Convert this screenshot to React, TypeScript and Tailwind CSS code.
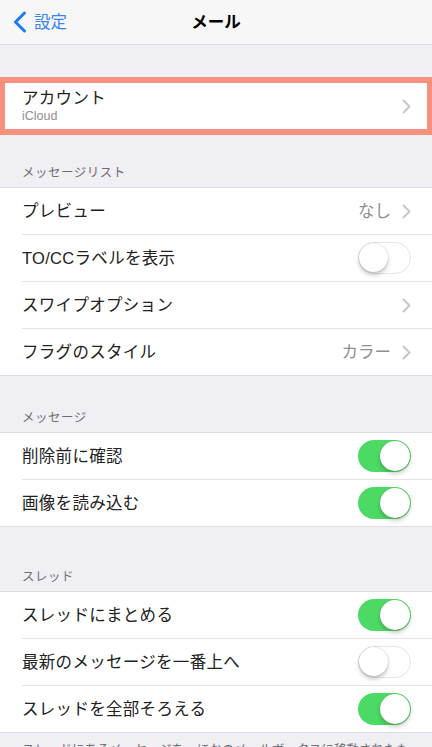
import React from 'react';

const font = { fontFamily: '"Liberation Sans", "Noto Sans CJK JP", sans-serif' };

function Chevron() {
  return (
    <svg width="9" height="15" viewBox="0 0 9 15" className="shrink-0">
      <polyline points="1.5,1.5 7.5,7.5 1.5,13.5" fill="none" stroke="#c7c7cc" strokeWidth="2" strokeLinecap="round" strokeLinejoin="round" />
    </svg>
  );
}

function Toggle({ on }: { on: boolean }) {
  return (
    <div
      className={
        on
          ? 'relative w-[53px] h-[32px] rounded-full bg-[#4cd964] shrink-0'
          : 'relative w-[53px] h-[32px] rounded-full bg-white border-[1.5px] border-[#e5e5ea] shrink-0'
      }
    >
      <div
        className={
          on
            ? 'absolute top-[1px] right-[1px] w-[30px] h-[30px] rounded-full bg-white shadow-[0_3px_4px_rgba(0,0,0,0.2),0_0_1px_rgba(0,0,0,0.2)]'
            : 'absolute top-[0px] left-[0px] w-[29px] h-[29px] rounded-full bg-white shadow-[0_3px_4px_rgba(0,0,0,0.22),0_0_1px_rgba(0,0,0,0.3)]'
        }
      />
    </div>
  );
}

type Row = { label: string; value?: string; chevron?: boolean; toggle?: boolean; on?: boolean };

function Group({ rows }: { rows: Row[] }) {
  return (
    <div className="bg-white border-y border-[#dedee2]">
      {rows.map((r, i) => (
        <div key={r.label} className="pl-[22px]">
          <div
            className={
              i < rows.length - 1
                ? 'h-[47px] flex items-center pr-[21px] border-b border-[#e3e3e6]'
                : 'h-[46px] flex items-center pr-[21px]'
            }
          >
            <span className="flex-1 text-[16.5px] text-[#222] tracking-[0.3px]">{r.label}</span>
            {r.value && <span className="text-[16.5px] text-[#8e8e93] mr-[11px]">{r.value}</span>}
            {r.chevron && <Chevron />}
            {r.toggle && <Toggle on={!!r.on} />}
          </div>
        </div>
      ))}
    </div>
  );
}

function Header({ text, h }: { text: string; h: string }) {
  return (
    <div className={`${h} flex items-end pl-[22px] pb-[4px]`}>
      <span className="text-[12.5px] text-[#6d6d72] tracking-[0.5px]">{text}</span>
    </div>
  );
}

export default function App() {
  return (
    <div style={font} className="w-[432px] h-[747px] overflow-hidden bg-[#efeff4]">
      {/* nav bar */}
      <div className="relative h-[45px] bg-[#f7f7f7] border-b border-[#d8d8dc] flex items-center">
        <div className="flex items-center pl-[13px] gap-[7px]">
          <svg width="14" height="22" viewBox="0 0 14 22">
            <polyline points="11.5,2 2.5,11 11.5,20" fill="none" stroke="#1a7cf5" strokeWidth="3" strokeLinecap="round" strokeLinejoin="round" />
          </svg>
          <span className="text-[16.5px] text-[#3a82f0]">設定</span>
        </div>
        <span className="absolute left-0 right-0 text-center text-[16.5px] font-semibold text-black pointer-events-none">メール</span>
      </div>

      <div className="h-[32px]" />

      {/* highlighted account cell */}
      <div className="border-x-[5px] border-y-[6px] border-[#f6907f] bg-white">
        <div className="h-[46px] flex items-center pl-[17px] pr-[16px]">
          <div className="flex-1 flex flex-col leading-none">
            <span className="text-[16.5px] text-[#222] tracking-[0.3px]">アカウント</span>
            <span className="text-[12.5px] text-[#8e8e93] mt-[4px]">iCloud</span>
          </div>
          <Chevron />
        </div>
      </div>

      <Header text="メッセージリスト" h="h-[52px]" />
      <Group
        rows={[
          { label: 'プレビュー', value: 'なし', chevron: true },
          { label: 'TO/CCラベルを表示', toggle: true, on: false },
          { label: 'スワイプオプション', chevron: true },
          { label: 'フラグのスタイル', value: 'カラー', chevron: true },
        ]}
      />

      <Header text="メッセージ" h="h-[56px]" />
      <Group
        rows={[
          { label: '削除前に確認', toggle: true, on: true },
          { label: '画像を読み込む', toggle: true, on: true },
        ]}
      />

      <Header text="スレッド" h="h-[64px]" />
      <Group
        rows={[
          { label: 'スレッドにまとめる', toggle: true, on: true },
          { label: '最新のメッセージを一番上へ', toggle: true, on: false },
          { label: 'スレッドを全部そろえる', toggle: true, on: true },
        ]}
      />

      <div className="pl-[22px] pr-[16px] pt-[9px] text-[12.5px] text-[#6d6d72] leading-[17px]">
        スレッドにあるメッセージを、ほかのメールボックスに移動されたものも含め、すべてスレッドにまとめます。
      </div>
    </div>
  );
}
